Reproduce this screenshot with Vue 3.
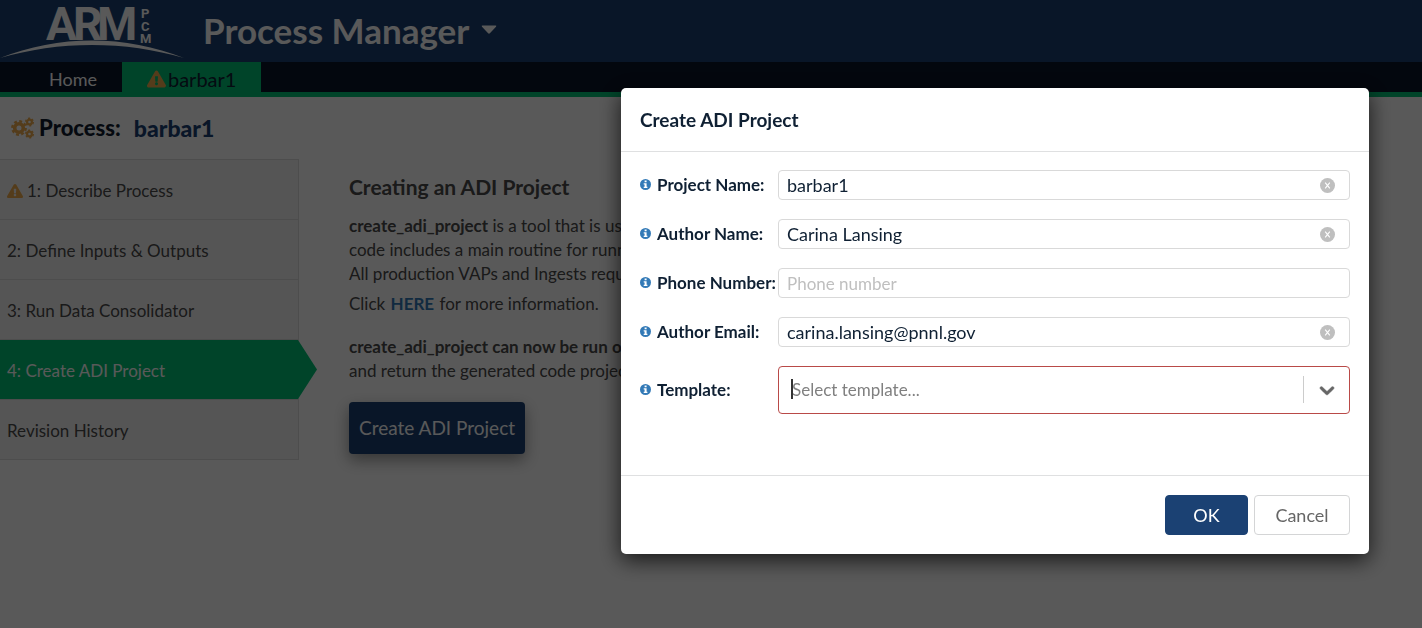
<script setup>
import { ref, reactive } from 'vue'

const steps = [
  { label: '1: Describe Process', warn: true },
  { label: '2: Define Inputs & Outputs' },
  { label: '3: Run Data Consolidator' },
  { label: '4: Create ADI Project', active: true },
  { label: 'Revision History' },
]

const fields = reactive([
  { id: 'project', label: 'Project Name:', type: 'text', value: 'barbar1', hint: '' },
  { id: 'author', label: 'Author Name:', type: 'text', value: 'Carina Lansing', hint: '' },
  { id: 'phone', label: 'Phone Number:', type: 'tel', value: '', hint: 'Phone number' },
  { id: 'email', label: 'Author Email:', type: 'email', value: 'carina.lansing@pnnl.gov', hint: '' },
])
const template = ref('')
</script>

<template>
  <div class="page">
    <header class="banner">
      <svg class="logo" width="184" height="62" viewBox="0 0 184 62" aria-label="ARM PCM">
        <text x="46 73 97" y="40" class="logo-main">ARM</text>
        <text x="141" y="18" class="logo-side">P</text>
        <text x="141" y="31" class="logo-side">C</text>
        <text x="140" y="43" class="logo-side">M</text>
        <path d="M0 58C58 34.500 126 34.500 184 58C126 40.500 58 40.500 0 58Z" fill="#fff" />
      </svg>
      <button class="brand" type="button">
        Process Manager
        <svg width="16" height="10" viewBox="0 0 16 10"><path d="M1.500 0.500h13q1.400 0 .5 1.200L8.900 8.300q-.9 .9-1.800 0L1 1.700Q.1 .5 1.500 .5Z" fill="currentColor" /></svg>
      </button>
    </header>

    <nav class="tabs">
      <a href="#" class="tab">Home</a>
      <a href="#" class="tab current">
        <svg class="warn" width="19" height="18" viewBox="0 0 576 512"><path fill="#f0ad4e" d="M569.5 440c18.500 32-4.700 72-41.600 72H48c-36.900 0-60-40.100-41.600-72L246.400 24c18.500-32 64.700-32 83.200 0l240 416zM288 354c-25.400 0-46 20.600-46 46s20.600 46 46 46 46-20.600 46-46-20.600-46-46-46zm-43.700-165.300l7.400 136c.3 6.400 5.600 11.300 12 11.300h48.500c6.400 0 11.600-5 12-11.300l7.400-136c.4-6.900-5.100-12.700-12-12.700h-63.400c-6.900 0-12.400 5.800-12 12.700z" /></svg>
        <span>barbar1</span>
      </a>
    </nav>

    <h1 class="process">
      <svg width="24" height="22" viewBox="0 0 24 22" fill="none" stroke="#f0ad4e">
        <circle cx="9" cy="11" r="4.300" stroke-width="3.600" />
        <circle cx="9" cy="11" r="6.700" stroke-width="2.400" stroke-dasharray="2.900 2.362" />
        <circle cx="19.500" cy="5" r="2.400" stroke-width="2.200" />
        <circle cx="19.500" cy="5" r="3.800" stroke-width="1.400" stroke-dasharray="2.100 1.879" />
        <circle cx="19.500" cy="17" r="2.400" stroke-width="2.200" />
        <circle cx="19.500" cy="17" r="3.800" stroke-width="1.400" stroke-dasharray="2.100 1.879" />
      </svg>
      <span>Process:</span>
      <span class="name">barbar1</span>
    </h1>

    <div class="columns">
      <ul class="steps">
        <li v-for="s in steps" :key="s.label">
          <a href="#" class="step" :class="{ active: s.active }">
            <svg v-if="s.warn" width="16" height="16" viewBox="0 0 576 512"><path fill="#f0ad4e" d="M569.5 440c18.500 32-4.700 72-41.600 72H48c-36.900 0-60-40.100-41.600-72L246.400 24c18.500-32 64.700-32 83.200 0l240 416zM288 354c-25.400 0-46 20.600-46 46s20.600 46 46 46 46-20.600 46-46-20.600-46-46-46zm-43.700-165.300l7.400 136c.3 6.400 5.600 11.300 12 11.300h48.500c6.400 0 11.600-5 12-11.300l7.400-136c.4-6.900-5.100-12.700-12-12.700h-63.400c-6.900 0-12.400 5.800-12 12.700z" /></svg>
            <span>{{ s.label }}</span>
            <svg v-if="s.active" class="tip" width="19" height="59" viewBox="0 0 19 59"><path d="M0 0L19 29.500L0 59Z" fill="#00c376" /></svg>
          </a>
        </li>
      </ul>

      <main class="content">
        <h2>Creating an ADI Project</h2>
        <p>
          <b>create_adi_project</b> is a tool that is used<br />
          code includes a main routine for running<br />
          All production VAPs and Ingests require
        </p>
        <p class="more">Click <a href="#">HERE</a> for more information.</p>
        <p class="run">
          <b>create_adi_project can now be run on</b><br />
          and return the generated code project
        </p>
        <button type="button" class="create">Create ADI Project</button>
      </main>
    </div>

    <div class="overlay">
      <form class="modal" role="dialog" aria-labelledby="dialog-title" @submit.prevent>
        <h3 id="dialog-title">Create ADI Project</h3>
        <div class="fields">
          <div v-for="f in fields" :key="f.id" class="row">
            <label :for="f.id">
              <svg width="11" height="12" viewBox="0 0 11 12"><circle cx="5.500" cy="5.500" r="5.500" fill="#337ab7" /><path d="M4.600 1.500h2v1.700h-2zM3.700 4.200h2.900v3.500h.8v1.300H3.700V7.700h.9V5.500h-.9z" fill="#fff" /></svg>
              {{ f.label }}
            </label>
            <div class="box">
              <input :id="f.id" v-model="f.value" :type="f.type" :placeholder="f.hint" />
              <button v-if="f.value" type="button" class="clear" aria-label="Clear" @click="f.value = ''">
                <svg width="15" height="15" viewBox="0 0 15 15"><circle cx="7.500" cy="7.500" r="7.500" fill="#bfbfbf" /><path d="M5.200 4.700l4.600 5.600M9.800 4.700L5.200 10.300" stroke="#fff" stroke-width="1.100" /></svg>
              </button>
            </div>
          </div>
          <div class="row">
            <label for="template">
              <svg width="11" height="12" viewBox="0 0 11 12"><circle cx="5.500" cy="5.500" r="5.500" fill="#337ab7" /><path d="M4.600 1.500h2v1.700h-2zM3.700 4.200h2.900v3.500h.8v1.300H3.700V7.700h.9V5.500h-.9z" fill="#fff" /></svg>
              Template:
            </label>
            <div class="box">
              <select id="template" v-model="template">
                <option value="" disabled>Select template...</option>
              </select>
              <span class="caret"></span>
              <span class="arrow">
                <svg width="24" height="24" viewBox="0 0 20 20"><path fill="#666" stroke="#666" stroke-width="0.500" d="M4.516 7.548c0.436-0.446 1.043-0.481 1.576 0l3.908 3.747 3.908-3.747c0.533-0.481 1.141-0.446 1.574 0 0.436 0.445 0.408 1.197 0 1.615-0.406 0.418-4.695 4.502-4.695 4.502-0.217 0.223-0.502 0.335-0.787 0.335s-0.570-0.112-0.789-0.335c0 0-4.287-4.084-4.695-4.502s-0.436-1.170 0-1.615z" /></svg>
              </span>
            </div>
          </div>
        </div>
        <footer>
          <button type="submit" class="ok">OK</button>
          <button type="button" class="cancel">Cancel</button>
        </footer>
      </form>
    </div>
  </div>
</template>

<style>
body {
  margin: 0;
}
</style>

<style scoped>
* {
  box-sizing: border-box;
}
.page {
  min-height: 100vh;
  background: #fff;
  color: #4a4a4a;
  font: 17px/24px Lato, "Open Sans", sans-serif;
}
button,
input,
select {
  font: inherit;
}
.banner {
  display: flex;
  height: 62px;
  background: #1b4173;
  color: #fff;
}
.logo {
  fill: #fff;
}
.logo-main {
  font: 700 46px Roboto, sans-serif;
}
.logo-side {
  font: 700 13px Roboto, sans-serif;
}
.brand {
  display: flex;
  align-items: center;
  gap: 12px;
  margin-left: 19px;
  padding: 0 0 2px;
  border: 0;
  background: none;
  color: inherit;
  font-size: 35px;
  font-weight: 700;
}
.tabs {
  display: flex;
  height: 35px;
  padding-left: 24px;
  border-bottom: 5px solid #00c376;
  background: #0a1428;
}
.tab {
  display: flex;
  align-items: center;
  height: 35px;
  padding: 0 25px 2px;
  color: #fff;
  font-size: 18px;
  text-decoration: none;
}
.tab.current {
  gap: 2px;
  background: #00c376;
  color: #0f2033;
  font-size: 20px;
}
.process {
  display: flex;
  align-items: center;
  margin: 0;
  padding: 0 10px;
  height: 62px;
  gap: 5px;
  color: #0f1c2e;
  font-size: 22px;
  font-weight: 900;
}
.process .name {
  margin-left: 8px;
  color: #1b4173;
  font-size: 23px;
}
.columns {
  display: flex;
  align-items: flex-start;
}
.steps {
  flex: none;
  width: 299px;
  margin: 0;
  padding: 0;
  border: 1px solid #dcdcdc;
  border-width: 1px 1px 0 0;
  background: #f4f4f4;
  list-style: none;
}
.step {
  position: relative;
  display: flex;
  align-items: center;
  gap: 4px;
  height: 60px;
  padding: 2px 7px 0;
  border-bottom: 1px solid #dcdcdc;
  color: inherit;
  text-decoration: none;
}
.step.active {
  background: #00c376;
  color: #fff;
}
.tip {
  position: absolute;
  top: 0;
  left: 100%;
}
.content {
  flex: 1;
  padding: 16px 0 0 50px;
  white-space: nowrap;
}
h2 {
  margin: 0 0 15px;
  font-size: 21px;
  line-height: 24px;
}
p {
  margin: 0;
}
.more {
  margin: 6px 0 19px;
}
.more a {
  margin: 0 1px;
  color: #337ab7;
  font-weight: 700;
  text-decoration: none;
}
.create {
  height: 52px;
  margin-top: 19px;
  padding: 0 10px;
  border: 0;
  border-radius: 4px;
  background: #1b4173;
  box-shadow: 0 6px 16px rgba(0, 0, 0, 0.4);
  color: #fff;
  font-size: 19px;
}
.overlay {
  position: fixed;
  inset: 0;
  display: flex;
  justify-content: flex-end;
  align-items: flex-start;
  padding: 88px 53px;
  background: rgba(0, 0, 0, 0.65);
}
.modal {
  width: 748px;
  border-radius: 5px;
  background: #fff;
  box-shadow: 0 6px 22px rgba(0, 0, 0, 0.75);
  color: #0f2033;
}
h3 {
  margin: 0;
  padding: 20px 19px 19px;
  border-bottom: 1px solid #dfe0e1;
  font-size: 19px;
  line-height: 24px;
}
.fields {
  display: grid;
  gap: 19px;
  padding: 18px 19px 61px;
}
.row {
  display: flex;
  align-items: center;
}
label {
  display: flex;
  align-items: center;
  gap: 6px;
  flex: none;
  width: 138px;
  font-weight: 700;
  white-space: nowrap;
}
.box {
  position: relative;
  flex: 1;
  display: flex;
}
input,
select {
  width: 100%;
  height: 30px;
  padding: 0 40px 0 8px;
  border: 1px solid #d9d9d9;
  border-radius: 4px;
  outline: 0;
  background: #fff;
  color: inherit;
}
input {
  font-size: 18px;
}
input::placeholder {
  color: #bfbfbf;
  font-size: 17px;
}
.clear {
  position: absolute;
  top: 8px;
  right: 15px;
  display: flex;
  padding: 0;
  border: 0;
  background: none;
}
select {
  appearance: none;
  height: 48px;
  padding: 0 60px 0 13px;
  border-color: #b94a48;
  color: #808080;
}
.caret {
  position: absolute;
  top: 13px;
  left: 13px;
  width: 2px;
  height: 20px;
  background: #333;
}
.arrow {
  position: absolute;
  top: 10px;
  right: 0;
  display: flex;
  align-items: center;
  height: 27px;
  padding: 0 11px;
  border-left: 1px solid #ccc;
  pointer-events: none;
}
footer {
  display: flex;
  justify-content: flex-end;
  gap: 6px;
  padding: 19px;
  border-top: 1px solid #dfe0e1;
}
.ok,
.cancel {
  height: 40px;
  border: 1px solid #1b4173;
  border-radius: 4px;
  background: #1b4173;
  color: #fff;
  font-size: 18px;
  width: 83px;
}
.cancel {
  width: 96px;
  border-color: #d4d5d6;
  background: #fff;
  color: #666;
}
</style>
